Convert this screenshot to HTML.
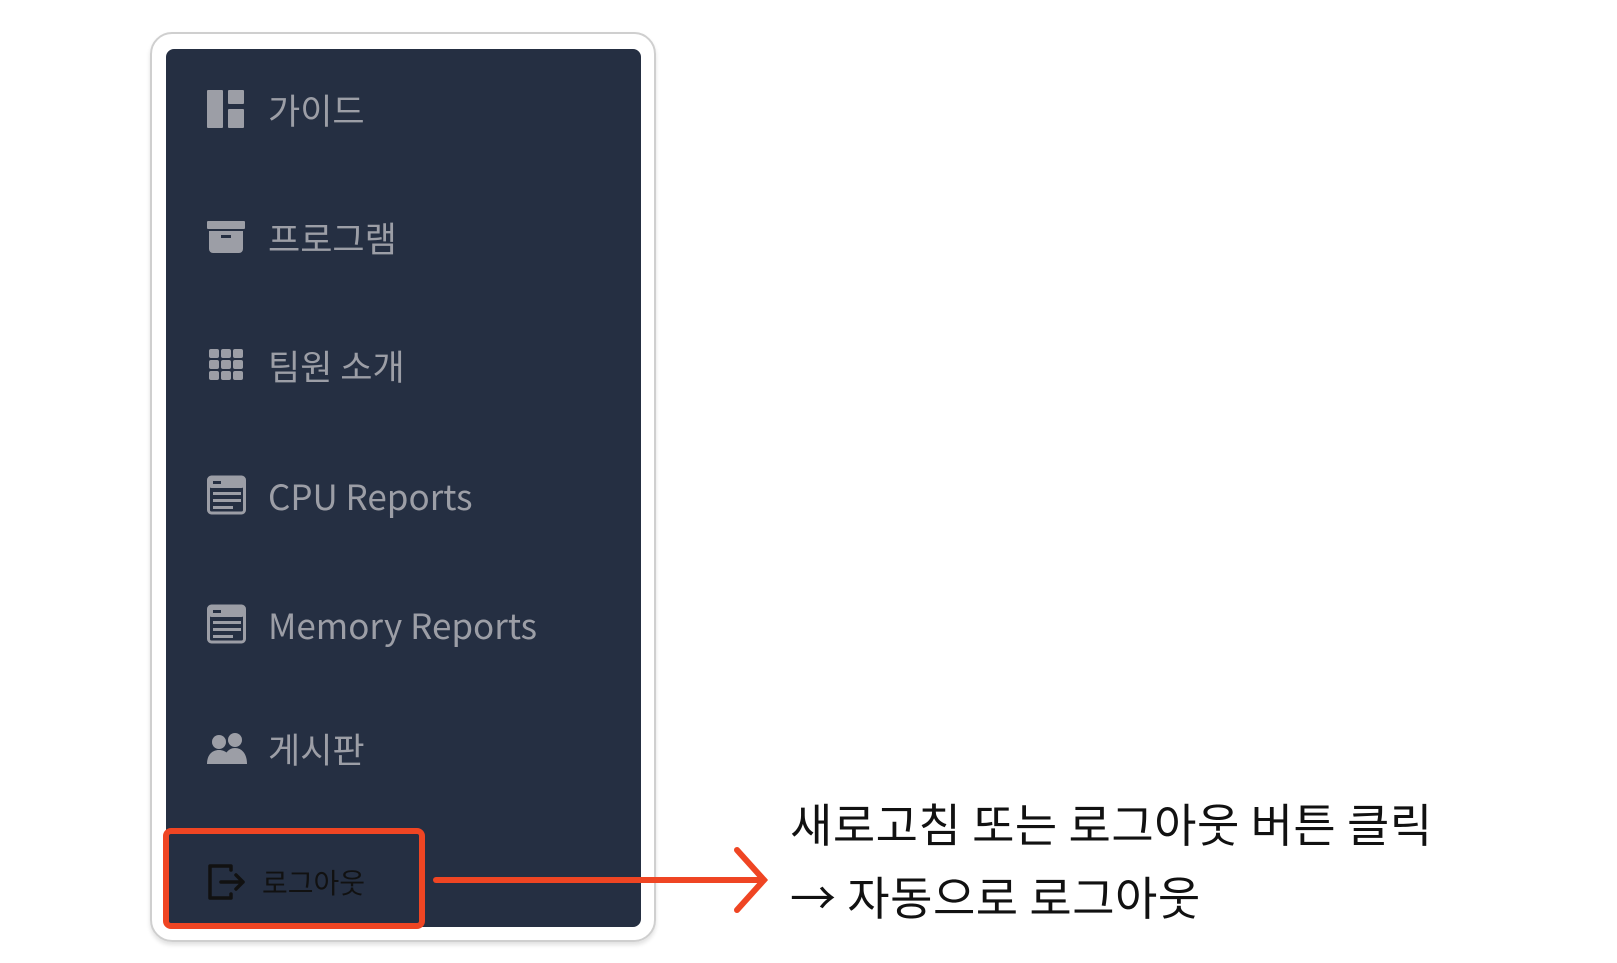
<!DOCTYPE html>
<html><head><meta charset="utf-8"><style>
body{margin:0;width:1617px;height:963px;background:#fff;position:relative;overflow:hidden;font-family:"Liberation Sans","Noto Sans CJK KR",sans-serif}
.card{position:absolute;left:150px;top:32px;width:506px;height:910px;border:2px solid #cfcfcf;border-radius:22px;box-sizing:border-box;box-shadow:0 3px 4px rgba(0,0,0,.12)}
.panel{position:absolute;left:166px;top:49px;width:475px;height:878px;background:#252f42;border-radius:8px}
.item{position:absolute;left:207px;height:40px;display:flex;align-items:center;color:#9c9ea6;font-size:35px;font-family:"Noto Sans CJK KR","Liberation Sans",sans-serif}
.item svg{width:40px;height:40px;margin-right:21px;flex:none}
.red{position:absolute;left:163px;top:828px;width:262px;height:101px;border:6px solid #ef4523;border-radius:8px;box-sizing:border-box}
.note{position:absolute;left:790px;font-size:46px;color:#111;font-family:"Noto Sans CJK KR",sans-serif;white-space:nowrap;letter-spacing:0.5px}
</style></head><body>
<div class="card"></div>
<div class="panel"></div>
<div class="item" style="top:89px"><svg viewBox="0 0 40 40"><rect x="0" y="1" width="16" height="38" rx="1" fill="#9c9ea6"/><rect x="21" y="1" width="16" height="14" rx="1" fill="#9c9ea6"/><rect x="21" y="20" width="16" height="19" rx="1" fill="#9c9ea6"/></svg>가이드</div>
<div class="item" style="top:217px"><svg viewBox="0 0 40 40"><rect x="0" y="4" width="38" height="8" rx="1" fill="#9c9ea6"/><path d="M2 14h34v18a4 4 0 0 1-4 4H6a4 4 0 0 1-4-4z" fill="#9c9ea6"/><rect x="14" y="18" width="10" height="3" fill="#252f42"/></svg>프로그램</div>
<div class="item" style="top:345px"><svg viewBox="0 0 40 40"><g fill="#9c9ea6"><rect x="2" y="4" width="10" height="9" rx="2"/><rect x="14" y="4" width="10" height="9" rx="2"/><rect x="26" y="4" width="10" height="9" rx="2"/><rect x="2" y="15" width="10" height="9" rx="2"/><rect x="14" y="15" width="10" height="9" rx="2"/><rect x="26" y="15" width="10" height="9" rx="2"/><rect x="2" y="26" width="10" height="9" rx="2"/><rect x="14" y="26" width="10" height="9" rx="2"/><rect x="26" y="26" width="10" height="9" rx="2"/></g></svg>팀원 소개</div>
<div class="item" style="top:475px"><svg viewBox="0 0 40 40"><g fill="none" stroke="#9c9ea6" stroke-width="3"><rect x="1.5" y="2" width="36" height="36" rx="3"/></g><rect x="1.5" y="2" width="36" height="11" rx="3" fill="#9c9ea6"/><rect x="6" y="17" width="28" height="3" fill="#9c9ea6"/><rect x="6" y="24" width="28" height="3" fill="#9c9ea6"/><rect x="6" y="31" width="20" height="3" fill="#9c9ea6"/><rect x="6" y="6" width="8" height="3" fill="#252f42"/></svg>CPU Reports</div>
<div class="item" style="top:604px"><svg viewBox="0 0 40 40"><g fill="none" stroke="#9c9ea6" stroke-width="3"><rect x="1.5" y="2" width="36" height="36" rx="3"/></g><rect x="1.5" y="2" width="36" height="11" rx="3" fill="#9c9ea6"/><rect x="6" y="17" width="28" height="3" fill="#9c9ea6"/><rect x="6" y="24" width="28" height="3" fill="#9c9ea6"/><rect x="6" y="31" width="20" height="3" fill="#9c9ea6"/><rect x="6" y="6" width="8" height="3" fill="#252f42"/></svg>Memory Reports</div>
<div class="item" style="top:728px"><svg viewBox="0 0 40 40"><g fill="#9c9ea6"><circle cx="12" cy="14" r="7"/><circle cx="28" cy="12" r="7"/><path d="M0 36c0-9 5-14 12-14s12 5 12 14z"/><path d="M16 36c0-9 5-16 12-16s12 6 12 16z"/></g></svg>게시판</div>
<div class="item" style="top:862px;color:#111;font-size:28px"><svg viewBox="0 0 40 40" style="margin-right:15px"><g fill="none" stroke="#111" stroke-width="3.5" stroke-linecap="round" stroke-linejoin="round"><path d="M24 8V4H3v32h21v-4"/><path d="M14 20h22M29 13l7 7-7 7"/></g></svg>로그아웃</div>
<div class="red"></div>
<svg style="position:absolute;left:430px;top:845px" width="345" height="70" viewBox="0 0 345 70"><g fill="none" stroke="#ef4523" stroke-width="6" stroke-linecap="round"><path d="M6 35H334"/><path d="M307 5L334 35L307 65"/></g></svg>
<div class="note" style="top:790px">새로고침 또는 로그아웃 버튼 클릭</div>
<div class="note" style="top:863px">→ 자동으로 로그아웃</div>
</body></html>
